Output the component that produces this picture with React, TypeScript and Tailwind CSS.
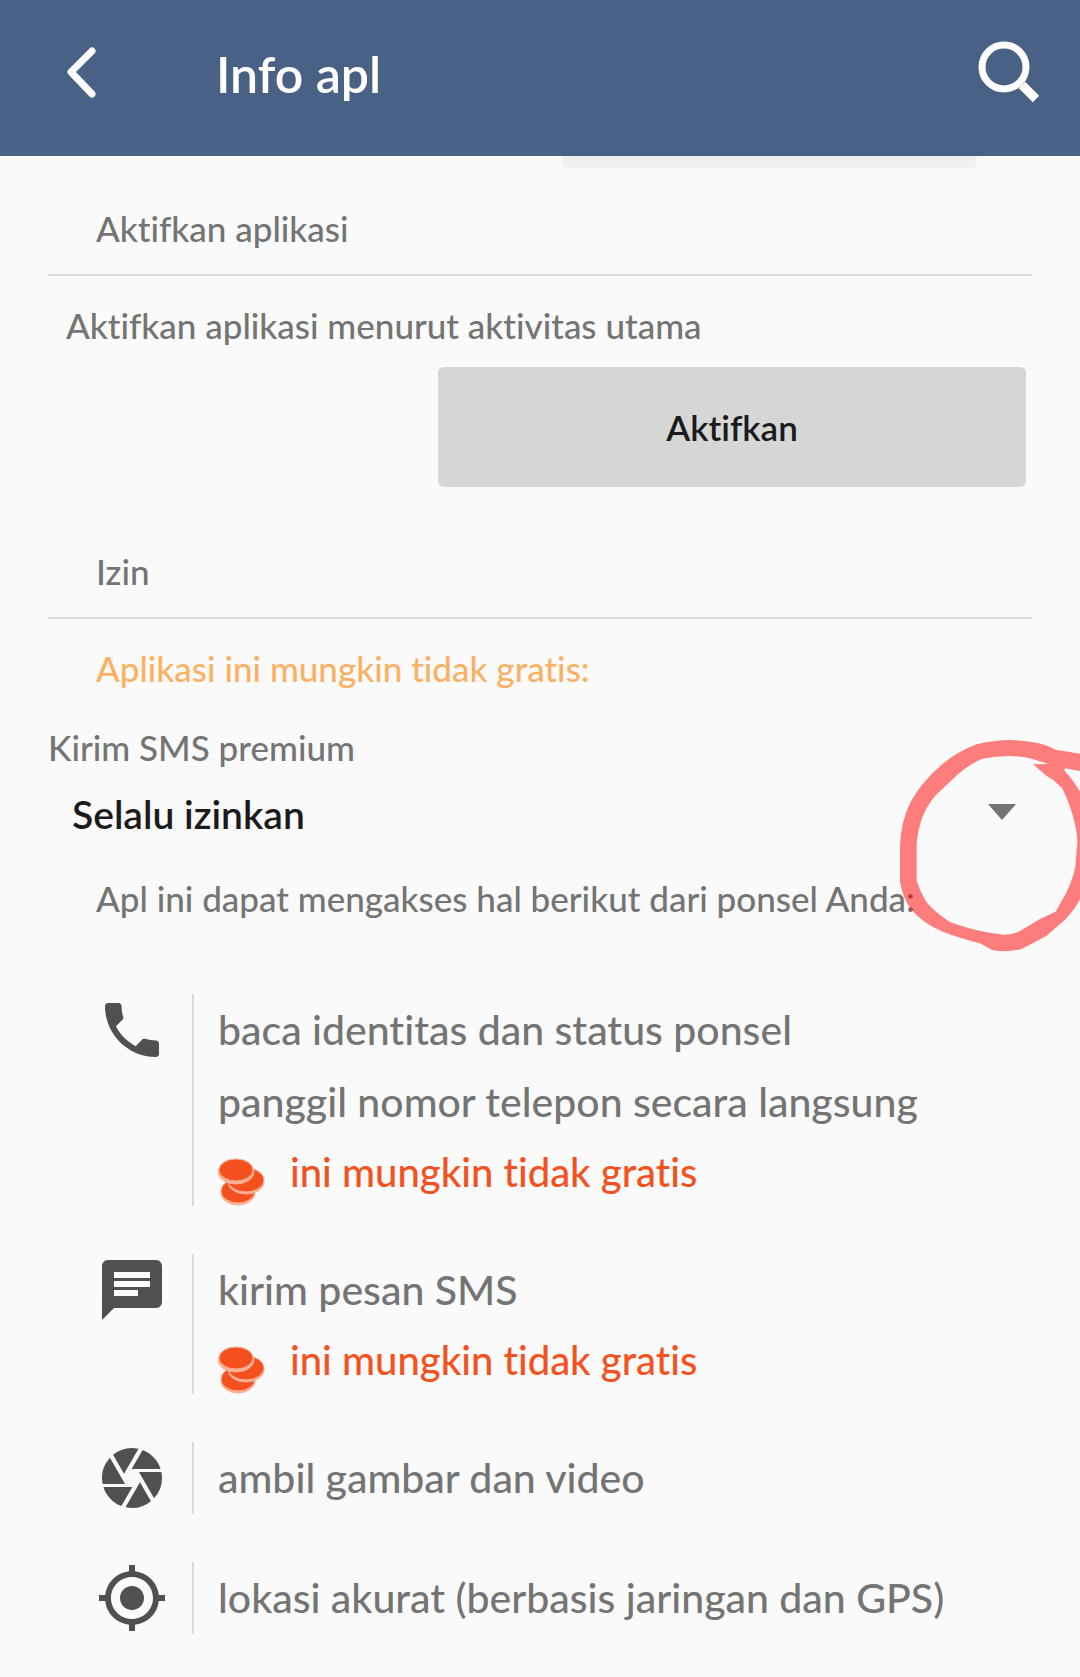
import { useState } from "react";
import { MdCamera, MdChat, MdMyLocation, MdPhone } from "react-icons/md";

const permissions = [
  {
    icon: MdPhone,
    lines: ["baca identitas dan status ponsel", "panggil nomor telepon secara langsung"],
    paid: true,
  },
  { icon: MdChat, lines: ["kirim pesan SMS"], paid: true },
  { icon: MdCamera, lines: ["ambil gambar dan video"], paid: false },
  { icon: MdMyLocation, lines: ["lokasi akurat (berbasis jaringan dan GPS)"], paid: false },
];

function CoinsIcon() {
  return (
    <svg className="w-12 h-12 shrink-0" viewBox="0 0 48 48" fill="#f4511e" stroke="#fbb094" strokeWidth="1" aria-hidden="true">
      <ellipse cx="20" cy="35" rx="17" ry="12" fill="#fbb094" />
      <ellipse cx="20" cy="33" rx="17" ry="12" />
      <ellipse cx="28" cy="24" rx="18" ry="12" fill="#fbb094" />
      <ellipse cx="28" cy="22" rx="18" ry="12" />
      <ellipse cx="18" cy="14" rx="18" ry="12" fill="#fbb094" />
      <ellipse cx="18" cy="12" rx="17" ry="11" />
    </svg>
  );
}

function SectionTitle({ children }: { children: string }) {
  return (
    <h2 className="mx-12 px-12 pb-[22px] border-b-2 border-[#dadada] text-[35px] leading-[48px] font-medium">
      {children}
    </h2>
  );
}

export default function App() {
  const [premiumSms, setPremiumSms] = useState("always");

  return (
    <div className="min-h-screen overflow-x-hidden bg-[#fafafa] font-['Lato',sans-serif] font-medium text-[#747474] [font-variant-ligatures:none]">
      <header className="flex items-center h-39 pl-14 pr-8 pb-3 bg-[#496185] text-white">
        <button type="button" aria-label="Kembali" className="w-12 h-16">
          <svg className="w-12 h-16" viewBox="0 0 48 64" fill="none" stroke="currentColor" strokeWidth="7" strokeLinecap="round" strokeLinejoin="round">
            <path d="M36 11L15 32L36 54" />
          </svg>
        </button>
        <h1 className="ml-28 flex-1 pt-1 text-[50px] leading-[60px] font-semibold">Info apl</h1>
        <button type="button" aria-label="Cari" className="w-18 h-18">
          <svg className="w-18 h-18" viewBox="0 0 72 72" fill="none" stroke="currentColor">
            <circle cx="28" cy="31" r="22" strokeWidth="7" />
            <path d="M46 49L60 63" strokeWidth="9" />
          </svg>
        </button>
      </header>

      <main className="pb-11">
        {/* bottom edge of the card scrolled under the header */}
        <div className="ml-[52%] mr-[103px] h-3 mb-9 rounded-b-md bg-[#f0f0f0]" />

        <section>
          <SectionTitle>Aktifkan aplikasi</SectionTitle>
          <p className="mt-[25px] px-[66px] text-[35px] leading-[48px]">
            Aktifkan aplikasi menurut aktivitas utama
          </p>
          <div className="flex justify-end mt-[18px] pr-[54px]">
            <button type="button" className="w-[588px] h-30 rounded-md bg-[#d5d7d6] text-[35px] font-semibold text-[#1b1b1b]">
              Aktifkan
            </button>
          </div>
        </section>

        <section className="mt-15">
          <SectionTitle>Izin</SectionTitle>
          <p className="mt-[25px] px-24 text-[35px] leading-[48px] text-[#fbb163]">
            Aplikasi ini mungkin tidak gratis:
          </p>

          <div className="relative mt-[31px]">
            <label htmlFor="premium-sms" className="block px-12 text-[35px] leading-[48px]">
              Kirim SMS premium
            </label>
            <div className="mt-[19px] pl-18 pr-16 flex items-center">
              <select
                id="premium-sms"
                value={premiumSms}
                onChange={(e) => setPremiumSms(e.target.value)}
                className="flex-1 h-12 appearance-none bg-transparent text-[39px] leading-[48px] font-semibold text-[#1b1b1b]"
              >
                <option value="always">Selalu izinkan</option>
                <option value="ask">Tanya</option>
                <option value="never">Jangan izinkan</option>
              </select>
              <svg className="w-7 h-4 mb-1 pointer-events-none" viewBox="0 0 28 16" fill="#747474" aria-hidden="true">
                <path d="M0 0h28L14 16z" />
              </svg>
            </div>

            {/* hand drawn marker around the drop-down arrow */}
            <svg
              className="absolute right-0 -top-[3px] w-[200px] h-[250px] pointer-events-none"
              viewBox="0 0 600 750"
              fill="#ff0000"
              fillOpacity="0.5"
              fillRule="evenodd"
              aria-hidden="true"
            >
              <path d="M600 101L527 89Q480 62 385 60Q330 62 290 73Q225 97 175 143Q125 187 92 245Q62 305 60 380V485Q68 530 90 565Q130 612 190 636Q240 655 300 670L335 689Q375 700 425 687L500 647L555 599Q580 575 600 538V215Q580 180 553 151L555 145L600 153ZM459 133L500 168L520 180L546 204Q570 250 585 312Q593 345 592 370Q588 410 586 440Q578 480 558 520L527 575L480 597L420 633Q395 646 370 644L315 636Q250 622 210 606Q165 578 140 547Q120 515 110 482V370Q115 320 130 285Q145 250 168 225L232 164Q270 132 305 117Q385 100 450 115L505 132Z" />
            </svg>
          </div>

          <p className="mt-9 px-24 text-[35px] leading-[48px]">
            Apl ini dapat mengakses hal berikut dari ponsel Anda:
          </p>

          <ul className="mt-18 pl-24 pr-12 space-y-12">
            {permissions.map(({ icon: Icon, lines, paid }) => (
              <li key={lines[0]} className="flex">
                <Icon className="w-18 h-18 shrink-0 text-[#505050]" />
                <div className="ml-6 pl-6 border-l-2 border-[#dadada] text-[41px]">
                  {lines.map((line) => (
                    <p key={line} className="leading-[72px]">{line}</p>
                  ))}
                  {paid && (
                    <div className="flex items-end gap-6 h-17 text-[40px] text-[#f4511e]">
                      <CoinsIcon />
                      <span className="leading-[68px]">ini mungkin tidak gratis</span>
                    </div>
                  )}
                </div>
              </li>
            ))}
          </ul>
        </section>
      </main>
    </div>
  );
}
